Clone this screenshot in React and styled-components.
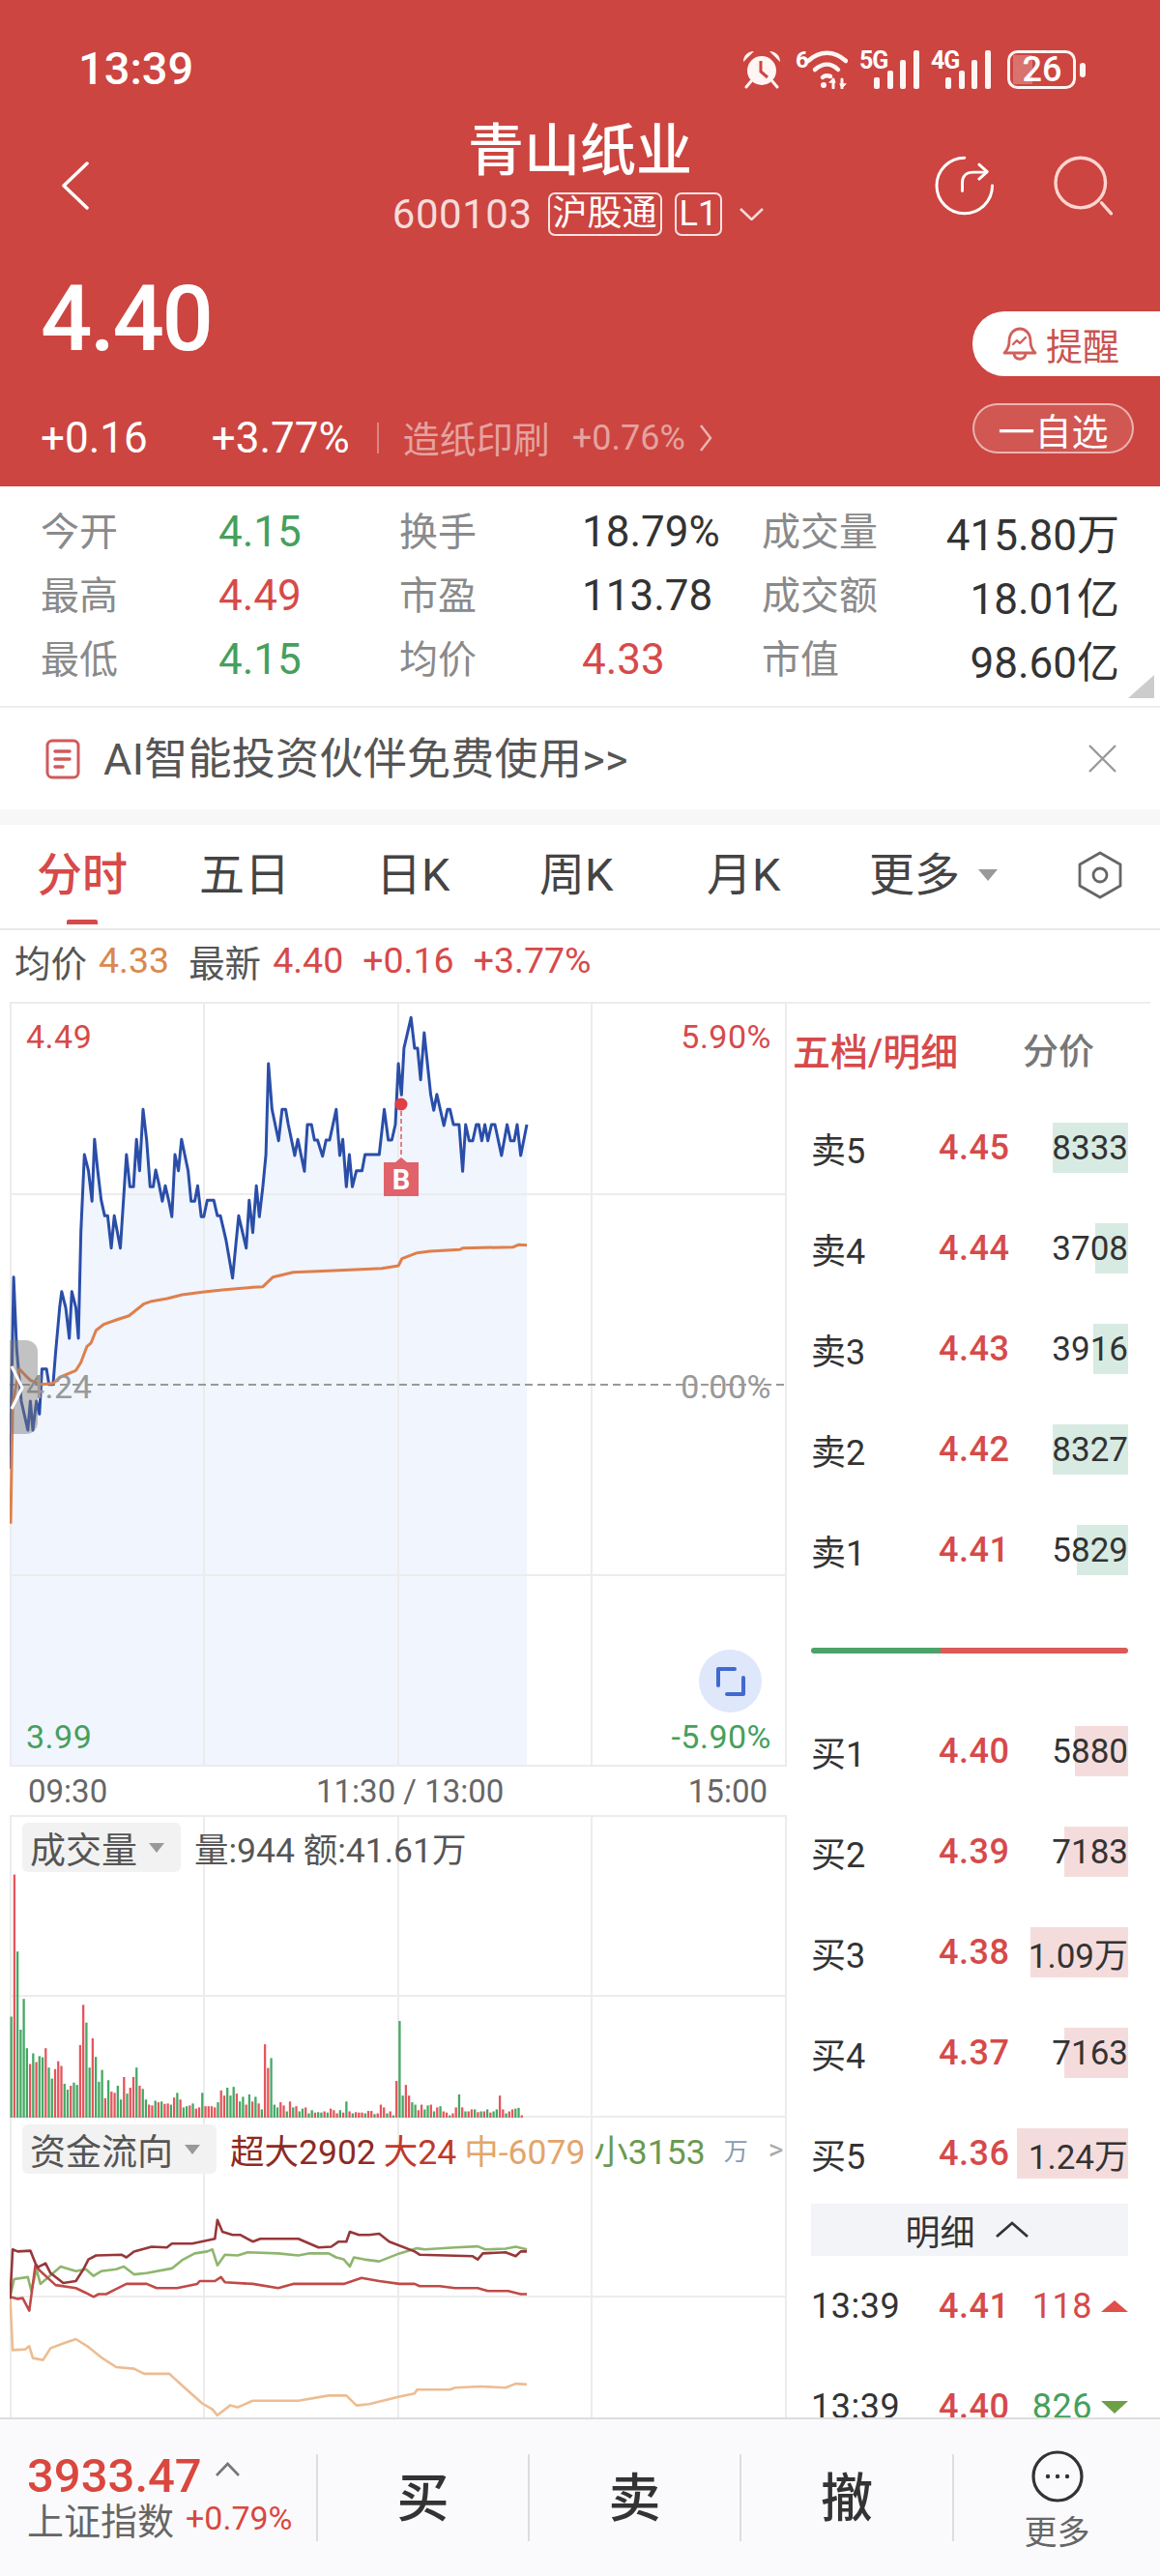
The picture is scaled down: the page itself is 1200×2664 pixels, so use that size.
import React from 'react'
import styled, { createGlobalStyle } from 'styled-components'

const RED = '#d64a4a'
const GREEN = '#45a05c'
const GRID = '#ececec'

const GlobalStyle = createGlobalStyle`
  html, body {
    margin: 0;
    padding: 0;
    background: #fff;
    font-family: Roboto, "Noto Sans CJK SC", sans-serif;
  }
  * {
    box-sizing: border-box;
  }
`

const Page = styled.div`
  width: 1200px;
  height: 2664px;
  display: flex;
  flex-direction: column;
  overflow: hidden;
  background: #fff;
  color: #333;
`

/* ---- red header ---- */

const Header = styled.header`
  height: 503px;
  flex: none;
  background: #cc4540;
  color: #fff;
`

const StatusBar = styled.div`
  height: 120px;
  display: flex;
  justify-content: space-between;
  padding: 48px 77px 0 81px;
`

const Clock = styled.div`
  font-size: 47px;
  line-height: 46px;
  font-weight: 500;
`

const StatusIcons = styled.div`
  display: flex;
  height: 40px;
  margin-top: 4px;
`

const SignalBox = styled.div`
  position: relative;
  width: ${props => props.$width}px;
  height: 40px;
  margin-left: ${props => props.$gap}px;
`

const IconShift = styled.div`
  margin-left: ${props => props.$left}px;
`

const SignalLabel = styled.span`
  position: absolute;
  left: 0;
  top: ${props => props.$top || 0}px;
  font-size: ${props => props.$size || 25}px;
  line-height: 22px;
  font-weight: 700;
  letter-spacing: -1px;
`

const BatteryText = styled.span`
  position: absolute;
  left: 15px;
  top: 0;
  width: 42px;
  text-align: center;
  font-size: 36px;
  line-height: 40px;
  font-weight: 500;
  color: #fff;
`

const NavRow = styled.div`
  height: 144px;
  display: flex;
  justify-content: space-between;
  padding: 0 49px 0 63px;
`

const NavIconSlot = styled.div`
  display: flex;
  align-items: center;
  gap: 61px;
  width: ${props => props.$width}px;
`

const NavCenter = styled.div`
  display: flex;
  flex-direction: column;
  align-items: center;
  padding-top: 6px;
  margin-right: 14px;
`

const StockName = styled.div`
  font-size: 58px;
  line-height: 60px;
  font-weight: 500;
`

const CodeRow = styled.div`
  display: flex;
  align-items: center;
  margin-top: 13px;
  margin-right: 4px;
  color: rgba(255, 255, 255, 0.82);
`

const StockCode = styled.span`
  font-size: 42px;
  line-height: 45px;
  letter-spacing: 0.5px;
`

const CodeTag = styled.span`
  height: 45px;
  padding: 0 ${props => props.$pad}px;
  margin-left: ${props => props.$gap}px;
  border: 2px solid rgba(255, 255, 255, 0.85);
  border-radius: 7px;
  font-size: 36px;
  line-height: 40px;
  color: #fff;
  white-space: nowrap;
`

const CodeCaret = styled.span`
  display: flex;
  margin-left: 18px;
`

const QuoteRow = styled.div`
  display: flex;
  justify-content: space-between;
  height: 239px;
`

const QuoteLeft = styled.div`
  padding: 16px 0 0 42px;
`

const BigPrice = styled.div`
  font-size: 94px;
  line-height: 100px;
  font-weight: 500;
  letter-spacing: -2.5px;
`

const ChangeRow = styled.div`
  display: flex;
  align-items: center;
  height: 50px;
  margin-top: 48px;
`

const ChangeText = styled.span`
  margin-right: ${props => props.$gap}px;
  margin-top: ${props => props.$lift ? -4 : 0}px;
  color: ${props => (props.$dim ? 'rgba(255,255,255,0.5)' : '#fff')};
  font-size: ${props => props.$size || 44}px;
  white-space: nowrap;
`

const VSplit = styled.span`
  width: 2px;
  height: 32px;
  margin-right: 25px;
  background: rgba(255, 255, 255, 0.35);
`

const QuoteRight = styled.div`
  width: 194px;
  display: flex;
  flex-direction: column;
  align-items: flex-start;
  gap: 28px;
  padding-top: 58px;
`

const AlertButton = styled.div`
  width: 194px;
  height: 67px;
  display: flex;
  align-items: center;
  gap: 9px;
  padding-left: 31px;
  border-radius: 33px 0 0 33px;
  background: #fff;
  color: #c95450;
  font-size: 38px;
`

const WatchButton = styled.div`
  width: 167px;
  height: 52px;
  display: flex;
  align-items: center;
  justify-content: center;
  border: 2px solid rgba(255, 255, 255, 0.55);
  border-radius: 26px;
  background: rgba(255, 255, 255, 0.1);
  font-size: 38px;
  white-space: nowrap;
`

/* ---- stats ---- */

const Stats = styled.section`
  position: relative;
  flex: none;
  height: 229px;
  display: grid;
  grid-template-columns: 184px 187px 189px 186px 170px 1fr;
  grid-auto-rows: 66px;
  align-items: center;
  padding: 14px 42px 0 42px;
  border-bottom: 2px solid #eee;
  font-size: 40px;
`

const StatLabel = styled.span`
  margin-top: -6px;
  color: #8a8a8a;
  white-space: nowrap;
`

const StatValue = styled.span`
  color: ${props => props.$color || '#333'};
  text-align: ${props => (props.$end ? 'right' : 'left')};
  font-size: 44px;
  white-space: nowrap;
`

const CornerMark = styled.div`
  position: absolute;
  right: 6px;
  bottom: 8px;
  width: 0;
  height: 0;
  border-left: 27px solid transparent;
  border-bottom: 24px solid #ccc;
`

const Promo = styled.section`
  flex: none;
  height: 105px;
  display: flex;
  align-items: center;
  gap: 24px;
  padding: 0 45px 0 47px;
  color: #555;
  font-size: 45px;
`

const PromoText = styled.span`
  flex: 1;
  margin-top: -6px;
  letter-spacing: 0.3px;
`

const Band = styled.div`
  flex: none;
  height: 16px;
  background: #f7f7f7;
`

/* ---- tabs ---- */

const Tabs = styled.nav`
  flex: none;
  height: 109px;
  display: grid;
  grid-template-columns: 168px 183px 169px 173px 168px 216px 1fr;
  align-items: center;
  padding: 0 0 4px 38px;
  border-bottom: 2px solid #e9e9e9;
`

const Tab = styled.div`
  position: relative;
  display: flex;
  align-items: center;
  gap: 19px;
  color: ${props => (props.$active ? RED : '#444')};
  font-size: 47px;
  line-height: 100px;
  font-weight: ${props => (props.$active ? 500 : 400)};

  ${props => props.$active && `
    &:after {
      content: '';
      position: absolute;
      left: 31px;
      bottom: -1px;
      width: 32px;
      height: 5px;
      border-radius: 2px 2px 0 0;
      background: ${RED};
    }
  `}
`

const Caret = styled.span`
  width: 0;
  height: 0;
  border-left: ${props => props.$size}px solid transparent;
  border-right: ${props => props.$size}px solid transparent;
  border-top: ${props => props.$size + 2}px solid #999;
`

const Legend = styled.div`
  flex: none;
  height: 74px;
  display: flex;
  align-items: center;
  padding: 0 0 12px 15px;
  font-size: 37.5px;
  color: #555;
`

const LegendText = styled.span`
  margin-right: ${props => props.$gap}px;
  color: ${props => props.$color || '#555'};
`

/* ---- chart column ---- */

const Body = styled.div`
  flex: 1;
  display: flex;
  min-height: 0;
  overflow: hidden;
`

const ChartColumn = styled.div`
  width: 814px;
  flex: none;
  padding-left: 10px;
`

const Panel = styled.div`
  position: relative;
  height: ${props => props.$height}px;

  svg {
    display: block;
  }
`

const ChartLabel = styled.span`
  position: absolute;
  top: ${props => props.$top}px;
  ${props => (props.$right ? `right: ${props.$right}px;` : `left: ${props.$left}px;`)}
  color: ${props => props.$color};
  font-size: 34px;
  line-height: 36px;
  letter-spacing: 0.5px;
`

const DragHandle = styled.div`
  position: absolute;
  left: 0;
  top: 350px;
  width: 29px;
  height: 97px;
  display: flex;
  align-items: center;
  border-radius: 0 12px 12px 0;
  background: rgba(120, 120, 120, 0.45);
`

const ExpandButton = styled.div`
  position: absolute;
  left: 713px;
  top: 670px;
  width: 65px;
  height: 65px;
  display: flex;
  align-items: center;
  justify-content: center;
  border-radius: 50%;
  background: #dfe7fb;
`

const TimeAxis = styled.div`
  height: 50px;
  display: grid;
  grid-template-columns: 298px 190px 1fr;
  align-items: center;
  padding: 0 20px 0 19px;
  color: #666;
  font-size: 33px;
`

const TimeLabel = styled.span`
  text-align: ${props => props.$align};
  white-space: nowrap;
`

const PanelHead = styled.div`
  position: absolute;
  left: 13px;
  top: ${props => props.$top}px;
  display: flex;
  align-items: center;
  white-space: nowrap;
`

const IndicatorTag = styled.div`
  height: 51px;
  display: flex;
  align-items: center;
  gap: 12px;
  padding: 0 17px 0 8px;
  margin-right: ${props => props.$gap}px;
  border-radius: 6px;
  background: #f2f2f2;
  color: #555;
  font-size: 37px;
`

const HeadText = styled.span`
  margin-right: ${props => props.$gap || 0}px;
  color: ${props => props.$color || '#555'};
  font-size: ${props => props.$size || 35.5}px;
`

/* ---- order book ---- */

const Book = styled.aside`
  flex: 1;
  padding: 0 23px 0 25px;
  border-top: 2px solid #eee;
  margin-right: 10px;
`

const BookHead = styled.div`
  height: 97px;
  display: flex;
  align-items: center;
  margin-left: -19px;
  padding-bottom: 4px;
`

const BookTitle = styled.span`
  width: 238px;
  color: ${RED};
  font-size: 39px;
  font-weight: 500;
`

const BookAlt = styled.span`
  color: #777;
  font-size: 37px;
  font-weight: 500;
`

const BookRows = styled.div``

const BookRow = styled.div`
  height: 104px;
  display: grid;
  grid-template-columns: 132px 86px 1fr;
  align-items: center;
  font-size: 36px;
  color: #333;
`

const BookPrice = styled.span`
  color: ${RED};
  font-weight: 500;
  letter-spacing: 0.5px;
`

const QtyCell = styled.span`
  position: relative;
  height: 52px;
  display: flex;
  align-items: center;
  justify-content: flex-end;
  white-space: nowrap;
  font-size: 35px;
`

const QtyText = styled.span`
  position: relative;
`

const DepthBar = styled.span`
  position: absolute;
  right: 0;
  top: 0;
  bottom: 0;
  background: ${props => (props.$sell ? '#d8ebe3' : '#f5dcdc')};
`

const DepthLine = styled.div`
  height: 6px;
  margin: 49px 0;
  border-radius: 3px;
  background: linear-gradient(90deg, #4ca36a 0 41%, #dc5a58 41% 100%);
`

const DetailToggle = styled.div`
  height: 54px;
  display: flex;
  align-items: center;
  justify-content: center;
  gap: 20px;
  padding-right: 5px;
  background: #f3f4f8;
  font-size: 36px;
  color: #333;
`

const TradeRow = styled.div`
  height: 104px;
  display: grid;
  grid-template-columns: 132px 93px 1fr 28px;
  align-items: center;
  font-size: 36px;
  letter-spacing: 0.5px;
`

const TradeQty = styled.span`
  text-align: right;
  padding-right: 9px;
  color: ${props => props.$color};
`

const TradeMark = styled.span`
  width: 0;
  height: 0;
  border-left: 14px solid transparent;
  border-right: 14px solid transparent;
  ${props => (props.$up ? `border-bottom: 12px solid #e0504a;` : `border-top: 13px solid #6da045;`)}
`

/* ---- footer ---- */

const Footer = styled.footer`
  flex: none;
  height: 164px;
  display: grid;
  grid-template-columns: 327px 219px 219px 220px 1fr;
  align-items: center;
  border-top: 2px solid #ddd;
  background: #fafafc;
`

const FootCell = styled.div`
  height: 90px;
  display: flex;
  flex-direction: column;
  align-items: center;
  justify-content: center;
  padding-top: ${props => props.$pad || 0}px;
  border-left: 2px solid #ddd;

  svg {
    flex: none;
  }
`

const IndexCell = styled.div`
  padding: 0 0 6px 28px;
`

const IndexTop = styled.div`
  display: flex;
  align-items: center;
  gap: 13px;
  height: 50px;
  color: #d9473f;
  font-size: 49px;
  font-weight: 500;
`

const IndexCaretSlot = styled.span`
  display: flex;
  margin-top: -14px;
`

const IndexBottom = styled.div`
  display: flex;
  align-items: center;
  gap: 12px;
  height: 42px;
  margin-top: -2px;
  white-space: nowrap;
`

const IndexName = styled.span`
  color: #666;
  font-size: 38px;
`

const IndexPct = styled.span`
  color: #d9473f;
  font-size: 34px;
`

const TradeAction = styled.span`
  margin-top: -8px;
  font-size: 54px;
  font-weight: 500;
  color: #333;
`

const MoreLabel = styled.span`
  flex: none;
  margin-top: 14px;
  font-size: 34px;
  line-height: 34px;
  color: #666;
`

/* ---- chart data, read off the picture (x, y in zoomed crop units) ---- */

const blueLine = [
  [20, 1500], [27, 905], [33, 1130], [42, 1290], [55, 1380], [60, 1290], [65, 1380], [72, 1290], [78, 1330], [83, 1190], [92, 1190], [97, 1238],
  [105, 1238], [110, 1140], [118, 1000], [122, 950], [130, 1000], [137, 1095], [142, 950], [150, 1000], [155, 1095], [160, 765], [167, 525], [175, 575],
  [182, 670], [187, 478], [193, 570], [200, 665], [207, 715], [213, 715], [220, 815], [226, 715], [238, 815], [250, 525], [257, 625], [264, 625],
  [270, 478], [276, 575], [283, 385], [290, 480], [297, 625], [303, 625], [308, 573], [315, 620], [321, 670], [327, 622], [334, 670], [340, 718],
  [346, 525], [353, 575], [359, 478], [372, 575], [378, 670], [385, 670], [391, 622], [398, 718], [403, 718], [410, 667], [423, 667], [430, 715],
  [436, 715], [447, 790], [460, 908], [472, 715], [487, 815], [493, 667], [500, 767], [507, 622], [513, 718], [520, 622], [526, 525], [531, 243],
  [538, 385], [551, 482], [558, 385], [565, 385], [570, 430], [583, 528], [589, 478], [602, 577], [608, 432], [616, 432], [622, 480], [628, 480],
  [638, 530], [645, 480], [652, 480], [665, 385], [672, 528], [678, 478], [685, 625], [691, 525], [697, 625], [705, 575], [716, 575], [722, 525],
  [750, 525], [760, 385], [768, 480], [775, 480], [782, 432], [788, 243], [794, 340], [799, 195], [813, 100], [820, 195], [826, 195], [832, 293],
  [839, 147], [852, 340], [858, 388], [864, 338], [878, 435], [885, 385], [890, 385], [897, 432], [908, 432], [915, 577], [921, 432], [928, 482],
  [935, 482], [942, 432], [947, 432], [953, 482], [959, 432], [965, 482], [972, 432], [979, 432], [992, 528], [1003, 432], [1010, 482], [1017, 482],
  [1023, 432], [1030, 528], [1042, 432]
]

const avgLine = [
  [21, 1670], [25, 1300], [38, 1190], [50, 1210], [60, 1225], [80, 1238], [105, 1235], [120, 1215], [135, 1205], [150, 1195], [160, 1170], [172, 1120],
  [180, 1110], [190, 1070], [205, 1052], [230, 1038], [255, 1025], [285, 988], [300, 980], [330, 972], [360, 960], [400, 952], [440, 945], [500, 937],
  [520, 935], [540, 905], [580, 890], [660, 885], [755, 878], [788, 870], [795, 848], [825, 830], [850, 825], [910, 820], [915, 815], [1015, 812],
  [1025, 805], [1042, 806]
]

// positive is a red bar, negative a green one; the value is the top of the bar in crop units
const volumeTops = [
  -555, 195, -390, -588, -510, -635, 675, -648, 670, -655, -658, 635, -684, -712, 688, 668, 680, -725, -740, 730,
  -722, -728, 627, 525, -570, -684, 610, -657, -720, -690, 762, -716, 745, 748, -730, -765, 708, -750, 735, 708,
  -684, 730, -738, -765, 778, 780, -768, 772, -770, 776, 775, -778, 760, -748, 765, -785, -782, 780, -775, 788,
  785, -748, 782, 782, 782, 785, -772, 742, 755, -735, -755, -733, 750, -770, -758, 778, -752, 770, -758, 775,
  -790, 625, 685, -660, -778, -785, 772, 780, -795, 770, -785, 782, -795, -788, 785, -800, -792, 798, -797, -798,
  795, -798, 788, 792, 800, -792, 798, -770, 795, -800, 797, 798, 798, -800, 794, 794, -802, 800, 778, 785,
  -800, 795, -805, 718, -566, -755, 728, 755, -772, -778, 792, 778, -790, -780, 778, -795, 785, -782, 795, 798,
  -805, 800, 785, -752, 785, -795, 795, 790, -790, 797, -795, 795, -790, 798, -795, -790, 755, 790, -800, 795,
  790, -788, -786, 805
]

const flowHuge = [
  [20, 1270], [25, 1145], [35, 1150], [60, 1148], [70, 1180], [75, 1190], [90, 1180], [100, 1205], [125, 1230], [150, 1225], [165, 1195], [175, 1170],
  [190, 1160], [240, 1158], [250, 1165], [265, 1150], [300, 1138], [330, 1140], [340, 1130], [380, 1130], [425, 1118], [430, 1070], [440, 1100], [460, 1108],
  [475, 1108], [500, 1125], [515, 1118], [590, 1118], [630, 1140], [655, 1138], [670, 1125], [685, 1125], [692, 1100], [710, 1108], [730, 1108], [750, 1105],
  [770, 1125], [820, 1150], [830, 1158], [935, 1162], [945, 1170], [955, 1155], [1000, 1152], [1020, 1162], [1030, 1150], [1042, 1150]
]

const flowLarge = [
  [20, 1265], [35, 1270], [45, 1268], [58, 1300], [70, 1185], [80, 1200], [110, 1235], [150, 1243], [170, 1255], [185, 1265], [195, 1258], [210, 1258],
  [230, 1245], [250, 1232], [290, 1232], [310, 1243], [350, 1243], [390, 1232], [395, 1225], [425, 1225], [437, 1215], [445, 1228], [500, 1232], [550, 1243],
  [580, 1232], [680, 1232], [715, 1217], [750, 1225], [790, 1232], [820, 1232], [830, 1238], [870, 1238], [900, 1243], [945, 1243], [965, 1250], [1005, 1250],
  [1030, 1258], [1042, 1258]
]

const flowSmall = [
  [20, 1265], [28, 1220], [55, 1215], [62, 1250], [72, 1195], [80, 1232], [100, 1210], [120, 1188], [150, 1200], [170, 1195], [185, 1212], [200, 1200],
  [230, 1195], [245, 1188], [265, 1208], [290, 1205], [340, 1193], [360, 1172], [385, 1155], [410, 1150], [420, 1145], [430, 1185], [445, 1158], [470, 1160],
  [490, 1152], [550, 1155], [590, 1160], [610, 1155], [650, 1155], [665, 1165], [680, 1170], [692, 1188], [700, 1165], [720, 1170], [750, 1175], [790, 1155],
  [825, 1142], [840, 1145], [900, 1140], [945, 1137], [960, 1145], [1000, 1143], [1020, 1138], [1042, 1145]
]

const flowMedium = [
  [20, 1265], [25, 1400], [50, 1398], [58, 1390], [65, 1420], [85, 1425], [100, 1395], [125, 1383], [150, 1372], [175, 1392], [200, 1418], [230, 1443],
  [265, 1447], [285, 1460], [335, 1460], [365, 1495], [400, 1535], [420, 1550], [430, 1565], [455, 1540], [470, 1545], [500, 1528], [590, 1528], [650, 1515],
  [685, 1515], [705, 1540], [730, 1537], [790, 1518], [820, 1510], [825, 1500], [890, 1500], [900, 1495], [950, 1492], [1000, 1495], [1020, 1485], [1042, 1487]
]

const toPoints = (list, originY, scaleY) =>
  list.map(([x, y]) => `${(x / 1.912).toFixed(1)},${(originY + y / scaleY).toFixed(1)}`).join(' ')

const sellRows = [
  { name: '卖5', price: '4.45', qty: '8333', bar: 78 },
  { name: '卖4', price: '4.44', qty: '3708', bar: 34 },
  { name: '卖3', price: '4.43', qty: '3916', bar: 36 },
  { name: '卖2', price: '4.42', qty: '8327', bar: 78 },
  { name: '卖1', price: '4.41', qty: '5829', bar: 53 }
]

const buyRows = [
  { name: '买1', price: '4.40', qty: '5880', bar: 55 },
  { name: '买2', price: '4.39', qty: '7183', bar: 66 },
  { name: '买3', price: '4.38', qty: '1.09万', bar: 101 },
  { name: '买4', price: '4.37', qty: '7163', bar: 66 },
  { name: '买5', price: '4.36', qty: '1.24万', bar: 115 }
]

const statRows = [
  ['今开', '4.15', GREEN, '换手', '18.79%', null, '成交量', '415.80万'],
  ['最高', '4.49', RED, '市盈', '113.78', null, '成交额', '18.01亿'],
  ['最低', '4.15', GREEN, '均价', '4.33', RED, '市值', '98.60亿']
]

/* ---- drawings ---- */

const Alarm = () => (
  <svg width='40' height='40' viewBox='0 0 40 40' fill='#fff5f3'>
    <circle cx='20' cy='21' r='15' />
    <path d='M1 12 C1 5 6 1 12 1 Z M39 12 C39 5 34 1 28 1 Z' />
    <path d='M9 32 L4 38 M31 32 L36 38' stroke='#fff5f3' strokeWidth='3' strokeLinecap='round' />
    <path d='M19 11 V22 L26 28' stroke='#cc4540' strokeWidth='3' fill='none' />
  </svg>
)

const Wifi = () => (
  <svg width='43' height='40' viewBox='0 0 43 40' fill='none' stroke='#fff5f3' strokeWidth='4.5' strokeLinecap='round'>
    <path d='M2 11 C14 0 29 0 41 11' />
    <path d='M9 20 C17 13 26 13 33 20' />
    <path d='M17 28 C19 26 22 26 25 27' />
    <circle cx='18' cy='36' r='3' fill='#fff5f3' stroke='none' />
    <path d='M28 30 V39 M37 30 V39' strokeWidth='3' />
    <path d='M24 33 L28 29 L30 33 Z M35 35 L37 39 L41 35 Z' fill='#fff5f3' strokeWidth='1' />
  </svg>
)

const Bars = () => (
  <svg width='47' height='40' viewBox='0 0 47 40' fill='#fff5f3'>
    <rect x='0' y='28' width='6' height='12' rx='2' />
    <rect x='14' y='21' width='6' height='19' rx='2' />
    <rect x='27' y='10' width='6' height='30' rx='2' />
    <rect x='41' y='0' width='6' height='40' rx='2' />
  </svg>
)

const Battery = () => (
  <svg width='81' height='40' viewBox='0 0 81 40' fill='none'>
    <rect x='1.5' y='1.5' width='68' height='37' rx='9' stroke='#fff5f3' strokeWidth='3' />
    <path d='M6 5 H26 V35 H6 Z' fill='rgba(255,255,255,0.25)' />
    <rect x='75' y='13' width='6' height='15' rx='3' fill='#fff5f3' />
  </svg>
)

const BackArrow = () => (
  <svg width='29' height='50' viewBox='0 0 29 50' fill='none' stroke='#fff' strokeWidth='3.5' strokeLinecap='round' strokeLinejoin='round'>
    <path d='M27 2 L3 25 L27 48' />
  </svg>
)

const ShareIcon = () => (
  <svg width='62' height='62' viewBox='0 0 62 62' fill='none' stroke='#fff' strokeWidth='3' strokeLinecap='round' strokeLinejoin='round'>
    <path d='M31 2 A29 29 0 1 0 60 31' />
    <path d='M28.7 36.5 V28 C28.7 21 33 17 40 17 H52' />
    <path d='M46.3 9 L54.7 16.5 L46.3 24' />
  </svg>
)

const SearchIcon = () => (
  <svg width='62' height='64' viewBox='0 0 62 64' fill='none' stroke='#ffd5d0' strokeWidth='3.4' strokeLinecap='round'>
    <circle cx='28' cy='29' r='26' />
    <path d='M50 50 L60 61' />
  </svg>
)

const SmallDown = () => (
  <svg width='25' height='13' viewBox='0 0 25 13' fill='none' stroke='rgba(255,255,255,0.8)' strokeWidth='2.5'>
    <path d='M1 1 L12.5 12 L24 1' />
  </svg>
)

const TinyRight = () => (
  <svg width='14' height='30' viewBox='0 0 14 30' fill='none' stroke='rgba(255,255,255,0.6)' strokeWidth='2.5'>
    <path d='M2 2 L12 15 L2 28' />
  </svg>
)

const Bell = () => (
  <svg width='36' height='36' viewBox='0 0 36 36' fill='none' stroke='#d0605c' strokeWidth='2.8' strokeLinejoin='round' strokeLinecap='round'>
    <path d='M2 27 C6 23 7 20 7 15 C7 7 12 2 18 2 C24 2 29 7 29 15 C29 20 30 23 34 27 Z' />
    <path d='M12 28 C13 35 23 35 24 28' />
    <path d='M11 18 L15 14 L18 17 L24 11' strokeWidth='2.4' />
  </svg>
)

const DocIcon = () => (
  <svg width='36' height='42' viewBox='0 0 36 42' fill='none' stroke='#d05a5a' strokeWidth='3'>
    <rect x='2' y='2' width='32' height='38' rx='5' />
    <path d='M10 13 H25 M10 21 H25 M10 29 H18' strokeWidth='3.5' strokeLinecap='round' />
  </svg>
)

const CloseIcon = () => (
  <svg width='29' height='29' viewBox='0 0 29 29' stroke='#999' strokeWidth='2.4'>
    <path d='M1 1 L28 28 M28 1 L1 28' />
  </svg>
)

const HexIcon = () => (
  <svg width='46' height='50' viewBox='0 0 46 50' fill='none' stroke='#666' strokeWidth='2.8' strokeLinejoin='round'>
    <path d='M23 2 L44 14 V36 L23 48 L2 36 V14 Z' />
    <circle cx='23' cy='25' r='7' />
  </svg>
)

const ExpandIcon = () => (
  <svg width='30' height='30' viewBox='0 0 30 30' fill='none' stroke='#4169cf' strokeWidth='4' strokeLinecap='round' strokeLinejoin='round'>
    <path d='M19 2 H2 V19' />
    <path d='M28 11 V28 H11' />
  </svg>
)

const UpChevron = () => (
  <svg width='36' height='18' viewBox='0 0 36 18' fill='none' stroke='#333' strokeWidth='2.8'>
    <path d='M2 16 L18 2 L34 16' />
  </svg>
)

const IndexCaret = () => (
  <svg width='27' height='15' viewBox='0 0 27 15' fill='none' stroke='#777' strokeWidth='2.6'>
    <path d='M2 14 L13.5 2 L25 14' />
  </svg>
)

const MoreIcon = () => (
  <svg width='54' height='54' viewBox='0 0 54 54' fill='none' stroke='#333' strokeWidth='3.2'>
    <circle cx='27' cy='27' r='25' />
    <circle cx='17' cy='27' r='2.2' fill='#333' stroke='none' />
    <circle cx='27' cy='27' r='2.2' fill='#333' stroke='none' />
    <circle cx='37' cy='27' r='2.2' fill='#333' stroke='none' />
  </svg>
)

const HandleArrow = () => (
  <svg width='16' height='48' viewBox='0 0 16 48' fill='none' stroke='#fff' strokeWidth='3'>
    <path d='M2 2 L13 24 L2 46' />
  </svg>
)

const GridLines = ({ top, height, rows }) => (
  <g stroke={GRID} strokeWidth='2'>
    {[11, 211, 412, 612, 813].map(x => (
      <line key={x} x1={x} x2={x} y1={top} y2={top + height} />
    ))}
    {rows.map(y => (
      <line key={y} x1={10} x2={814} y1={y} y2={y} />
    ))}
  </g>
)

const PriceChart = () => {
  const line = toPoints(blueLine, 1020, 3)
  return (
    <svg width='804' height='791' viewBox='10 1037 804 791'>
      <polygon points={`${line} 545,1828 10.5,1828`} fill='#f0f5fe' />
      <GridLines top={1037} height={791} rows={[1038, 1236, 1630, 1827]} />
      <line x1='10' x2='814' y1='1433' y2='1433' stroke='#999' strokeWidth='2' strokeDasharray='8 5' />
      <polyline points={line} fill='none' stroke='#2a4ea8' strokeWidth='3' strokeLinejoin='round' />
      <polyline points={toPoints(avgLine, 1020, 3)} fill='none' stroke='#df7f4c' strokeWidth='3' strokeLinejoin='round' />
      <line x1='415' x2='415' y1='1150' y2='1198' stroke='#e0636b' strokeWidth='1.6' strokeDasharray='5 3' />
      <circle cx='415' cy='1143' r='6.5' fill='#e03f45' />
      <path d='M415 1198 L421 1203 H433 V1238 H397 V1203 H409 Z' fill='#e0636b' />
      <text x='415' y='1231' textAnchor='middle' fontSize='29' fontWeight='700' fontFamily='Roboto, sans-serif' fill='#fff'>B</text>
    </svg>
  )
}

const VolumeChart = () => (
  <svg width='804' height='313' viewBox='10 1878 804 313'>
    <GridLines top={1878} height={313} rows={[1879, 2065, 2190]} />
    {volumeTops.map((top, index) => {
      const y = 1860 + Math.abs(top) / 2.45
      return (
        <rect
          key={index}
          x={10.5 + index * 3.24}
          y={y}
          width='2.3'
          height={2191 - y}
          fill={top > 0 ? '#e5565c' : '#45a864'}
        />
      )
    })}
  </svg>
)

const FlowChart = () => (
  <svg width='804' height='310' viewBox='10 2191 804 310'>
    <GridLines top={2191} height={310} rows={[2376]} />
    <g fill='none' strokeWidth='2.6' strokeLinejoin='round'>
      <polyline points={toPoints(flowMedium, 1860, 2.45)} stroke='#ecbd92' />
      <polyline points={toPoints(flowSmall, 1860, 2.45)} stroke='#8fb56e' />
      <polyline points={toPoints(flowLarge, 1860, 2.45)} stroke='#c04a48' />
      <polyline points={toPoints(flowHuge, 1860, 2.45)} stroke='#97373a' />
    </g>
  </svg>
)

const OrderRow = ({ row, sell }) => (
  <BookRow>
    <span>{row.name}</span>
    <BookPrice>{row.price}</BookPrice>
    <QtyCell>
      <DepthBar $sell={sell} style={{ width: row.bar }} />
      <QtyText>{row.qty}</QtyText>
    </QtyCell>
  </BookRow>
)

const App = () => {
  return (
    <Page>
      <GlobalStyle />
      <Header>
        <StatusBar>
          <Clock>13:39</Clock>
          <StatusIcons>
            <Alarm />
            <SignalBox $width={54} $gap={15}>
              <SignalLabel $size={24} $top={-1}>6</SignalLabel>
              <IconShift $left={11}><Wifi /></IconShift>
            </SignalBox>
            <SignalBox $width={62} $gap={12}>
              <SignalLabel>5G</SignalLabel>
              <IconShift $left={15}><Bars /></IconShift>
            </SignalBox>
            <SignalBox $width={62} $gap={12}>
              <SignalLabel>4G</SignalLabel>
              <IconShift $left={15}><Bars /></IconShift>
            </SignalBox>
            <SignalBox $width={81} $gap={17}>
              <Battery />
              <BatteryText>26</BatteryText>
            </SignalBox>
          </StatusIcons>
        </StatusBar>
        <NavRow>
          <NavIconSlot $width={184}><BackArrow /></NavIconSlot>
          <NavCenter>
            <StockName>青山纸业</StockName>
            <CodeRow>
              <StockCode>600103</StockCode>
              <CodeTag $pad={3} $gap={16}>沪股通</CodeTag>
              <CodeTag $pad={3} $gap={13}>L1</CodeTag>
              <CodeCaret><SmallDown /></CodeCaret>
            </CodeRow>
          </NavCenter>
          <NavIconSlot $width={184}><ShareIcon /><SearchIcon /></NavIconSlot>
        </NavRow>
        <QuoteRow>
          <QuoteLeft>
            <BigPrice>4.40</BigPrice>
            <ChangeRow>
              <ChangeText $gap={66}>+0.16</ChangeText>
              <ChangeText $gap={28}>+3.77%</ChangeText>
              <VSplit />
              <ChangeText $dim $lift $size={38} $gap={23}>造纸印刷</ChangeText>
              <ChangeText $dim $size={36} $gap={14}>+0.76%</ChangeText>
              <TinyRight />
            </ChangeRow>
          </QuoteLeft>
          <QuoteRight>
            <AlertButton><Bell />提醒</AlertButton>
            <WatchButton>一自选</WatchButton>
          </QuoteRight>
        </QuoteRow>
      </Header>

      <Stats>
        {statRows.map(([a, b, color, c, d, dColor, e, f]) => (
          <React.Fragment key={a}>
            <StatLabel>{a}</StatLabel>
            <StatValue $color={color}>{b}</StatValue>
            <StatLabel>{c}</StatLabel>
            <StatValue $color={dColor}>{d}</StatValue>
            <StatLabel>{e}</StatLabel>
            <StatValue $end>{f}</StatValue>
          </React.Fragment>
        ))}
        <CornerMark />
      </Stats>

      <Promo>
        <DocIcon />
        <PromoText>AI智能投资伙伴免费使用&gt;&gt;</PromoText>
        <CloseIcon />
      </Promo>
      <Band />

      <Tabs>
        <Tab $active>分时</Tab>
        <Tab>五日</Tab>
        <Tab>日K</Tab>
        <Tab>周K</Tab>
        <Tab>月K</Tab>
        <Tab>更多<Caret $size={10} /></Tab>
        <HexIcon />
      </Tabs>

      <Legend>
        <LegendText $gap={12}>均价</LegendText>
        <LegendText $gap={20} $color='#d9894f'>4.33</LegendText>
        <LegendText $gap={12}>最新</LegendText>
        <LegendText $gap={20} $color={RED}>4.40</LegendText>
        <LegendText $gap={20} $color={RED}>+0.16</LegendText>
        <LegendText $gap={0} $color={RED}>+3.77%</LegendText>
      </Legend>

      <Body>
        <ChartColumn>
          <Panel $height={791}>
            <PriceChart />
            <ChartLabel $left={17} $top={18} $color={RED}>4.49</ChartLabel>
            <ChartLabel $right={16} $top={18} $color={RED}>5.90%</ChartLabel>
            <ChartLabel $left={17} $top={380} $color='#999'>4.24</ChartLabel>
            <ChartLabel $right={16} $top={380} $color='#999'>0.00%</ChartLabel>
            <ChartLabel $left={17} $top={742} $color={GREEN}>3.99</ChartLabel>
            <ChartLabel $right={16} $top={742} $color={GREEN}>-5.90%</ChartLabel>
            <DragHandle><HandleArrow /></DragHandle>
            <ExpandButton><ExpandIcon /></ExpandButton>
          </Panel>
          <TimeAxis>
            <TimeLabel $align='left'>09:30</TimeLabel>
            <TimeLabel $align='left'>11:30 / 13:00</TimeLabel>
            <TimeLabel $align='right'>15:00</TimeLabel>
          </TimeAxis>
          <Panel $height={313}>
            <VolumeChart />
            <PanelHead $top={8}>
              <IndicatorTag $gap={14}>成交量<Caret $size={8} /></IndicatorTag>
              <HeadText>量:944 额:41.61万</HeadText>
            </PanelHead>
          </Panel>
          <Panel $height={310}>
            <FlowChart />
            <PanelHead $top={7}>
              <IndicatorTag $gap={14}>资金流向<Caret $size={8} /></IndicatorTag>
              <HeadText $color='#8e2a22' $gap={8}>超大2902</HeadText>
              <HeadText $color='#c0392b' $gap={8}>大24</HeadText>
              <HeadText $color='#e3a56b' $gap={9}>中-6079</HeadText>
              <HeadText $color='#6a9a50' $gap={19}>小3153</HeadText>
              <HeadText $color='#8a9ab0' $size={25} $gap={21}>万</HeadText>
              <HeadText $color='#aaa' $size={30}>&gt;</HeadText>
            </PanelHead>
          </Panel>
        </ChartColumn>

        <Book>
          <BookHead>
            <BookTitle>五档/明细</BookTitle>
            <BookAlt>分价</BookAlt>
          </BookHead>
          <BookRows>
            {sellRows.map(row => <OrderRow key={row.name} row={row} sell />)}
          </BookRows>
          <DepthLine />
          <BookRows>
            {buyRows.map(row => <OrderRow key={row.name} row={row} />)}
          </BookRows>
          <DetailToggle>明细<UpChevron /></DetailToggle>
          <TradeRow>
            <span>13:39</span>
            <BookPrice>4.41</BookPrice>
            <TradeQty $color={RED}>118</TradeQty>
            <TradeMark $up />
          </TradeRow>
          <TradeRow>
            <span>13:39</span>
            <BookPrice>4.40</BookPrice>
            <TradeQty $color={GREEN}>826</TradeQty>
            <TradeMark />
          </TradeRow>
        </Book>
      </Body>

      <Footer>
        <IndexCell>
          <IndexTop>3933.47<IndexCaretSlot><IndexCaret /></IndexCaretSlot></IndexTop>
          <IndexBottom>
            <IndexName>上证指数</IndexName>
            <IndexPct>+0.79%</IndexPct>
          </IndexBottom>
        </IndexCell>
        <FootCell><TradeAction>买</TradeAction></FootCell>
        <FootCell><TradeAction>卖</TradeAction></FootCell>
        <FootCell><TradeAction>撤</TradeAction></FootCell>
        <FootCell $pad={4}><MoreIcon /><MoreLabel>更多</MoreLabel></FootCell>
      </Footer>
    </Page>
  )
}

export default App
